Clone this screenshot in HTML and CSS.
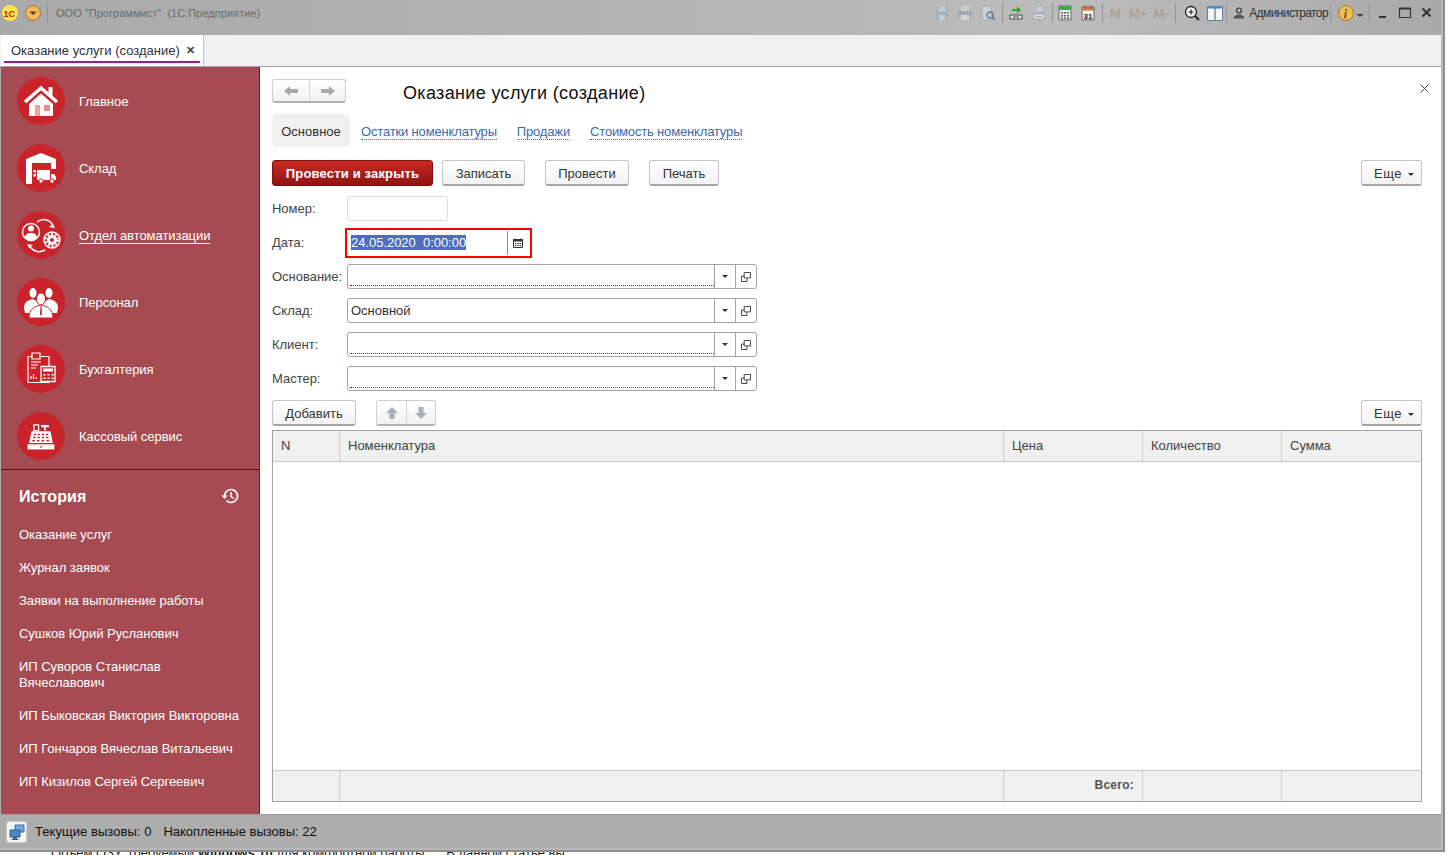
FILE: index.html
```html
<!DOCTYPE html>
<html lang="ru">
<head>
<meta charset="utf-8">
<title>Оказание услуги (создание)</title>
<link rel="stylesheet" href="styles.css">
</head>
<body>
<div class="window">
  <header class="titlebar">
    <svg class="logo" width="20" height="20" viewBox="0 0 20 20"><circle cx="10" cy="10" r="8" fill="#fbe64a"/><text x="3.500" y="13.500" class="logo-text">1С</text></svg>
    <svg class="menu-btn" width="18" height="18" viewBox="0 0 18 18"><circle cx="9" cy="9" r="7.500" fill="#edb860" stroke="#a9752c"/><path d="M5.500 7.500h7L9 11z" fill="#5a3c16"/></svg>
    <span class="tb-sep title-sep"></span>
    <span class="app-title">ООО "Программист"  (1С:Предприятие)</span>
    <div class="tools">
      <svg class="ti" viewBox="0 0 16 16"><path d="M2 1h12v14H2z" fill="#a5b2bc"/><path d="M4.500 1.500h7v5h-7zM5 10h6v5H5z" fill="#c4ccd2"/></svg>
      <svg class="ti" viewBox="0 0 16 16"><path d="M4 1h8v5H4z" fill="#c8cdd1"/><path d="M1 6h14v6H1z" fill="#9faab3"/><path d="M4 10h8v5H4z" fill="#d3d6d8"/></svg>
      <svg class="ti" viewBox="0 0 16 16"><path d="M2 1h9v14H2z" fill="#cdd2d6" stroke="#a4aeb6"/><circle cx="10" cy="10" r="3" fill="none" stroke="#6f8090" stroke-width="1.500"/><path d="M12 12l3 3" stroke="#6f8090" stroke-width="2"/></svg>
      <span class="tb-sep"></span>
      <svg class="ti" viewBox="0 0 16 16"><path d="M4 4h5V1.500L13 5 9 8.500V6H4z" fill="#1faa2c"/><path d="M2 10h12v4H2z" fill="#e9e9e9" stroke="#444"/><path d="M5 12h6" stroke="#444"/></svg>
      <svg class="ti" viewBox="0 0 16 16"><path d="M5 1h7v6H5z" fill="#ccd0d4" stroke="#a7b0b8"/><path d="M2 9h12v5H2z" fill="#d8dadc" stroke="#9ca6ae"/><path d="M5 11.500h6" stroke="#9ca6ae"/></svg>
      <span class="tb-sep tight"></span>
      <svg class="ti" viewBox="0 0 16 16"><path d="M2 1h12v14H2z" fill="#e8e8e8" stroke="#6d6d6d"/><path d="M2 1h12v4H2z" fill="#3fae49"/><path d="M4 7h2v1.500H4zm3 0h2v1.500H7zm3 0h2v1.500h-2zM4 10h2v1.500H4zm3 0h2v1.500H7zm3 0h2v1.500h-2zM4 12.500h2V14H4zm3 0h2V14H7zm3 0h2V14h-2z" fill="#666"/></svg>
      <svg class="ti" viewBox="0 0 16 16"><path d="M2 2h12v13H2z" fill="#f0f0f0" stroke="#666"/><path d="M2 2h12v3.500H2z" fill="#c9794a"/><path d="M5 .5v3M11 .5v3" stroke="#8a4d28"/><text x="3.500" y="13.500" class="cal-text">31</text></svg>
      <span class="tb-sep tight-right"></span>
      <span class="mem">M</span><span class="mem">M+</span><span class="mem">M-</span>
      <span class="tb-sep"></span>
      <svg class="ti zoom-i" viewBox="0 0 16 16"><circle cx="7" cy="7" r="5.500" fill="#f4f4f4" stroke="#222" stroke-width="1.300"/><path d="M4.500 7h5M7 4.500v5" stroke="#222" stroke-width="1.200"/><path d="M11 11l4 4" stroke="#222" stroke-width="1.800"/></svg>
      <svg class="ti panel-i" viewBox="0 0 16 16"><path d="M.5 1.500h15v14H.5z" fill="#f6f6f6" stroke="#66809c"/><path d="M1 1.500h14v2H1z" fill="#3c8ed6"/><path d="M8 3v12" stroke="#556"/></svg>
      <span class="tb-sep"></span>
      <svg class="user-i" width="12" height="12" viewBox="0 0 12 12"><circle cx="6" cy="3.500" r="2.500" fill="none" stroke="#333" stroke-width="1.200"/><path d="M1 11.500V9.500L4.500 7.500h3L11 9.500v2z" fill="#555"/></svg>
      <span class="user">Администратор</span>
      <span class="tb-sep"></span>
      <svg class="info" width="18" height="18" viewBox="0 0 18 18"><circle cx="9" cy="9" r="7.500" fill="#f0bd58" stroke="#a9752c"/><text x="6.800" y="14" class="info-text">i</text></svg>
      <span class="caret dark"></span>
      <span class="tb-sep"></span>
      <svg class="win-b" width="14" height="14" viewBox="0 0 14 14"><path d="M3 11h7" stroke="#333" stroke-width="2"/></svg>
      <svg class="win-b" width="14" height="14" viewBox="0 0 14 14"><path d="M1.500 2.500h11v9h-11z" fill="none" stroke="#333" stroke-width="1.200"/><path d="M1 2.500h12" stroke="#333" stroke-width="2"/></svg>
      <svg class="win-b" width="14" height="14" viewBox="0 0 14 14"><path d="M2.500 2.500l8 8M10.500 2.500l-8 8" stroke="#333" stroke-width="2"/></svg>
    </div>
  </header>

  <div class="tabbar">
    <div class="tab"><span class="tab-label">Оказание услуги (создание)</span><span class="tab-x">✕</span></div>
  </div>

  <div class="main">
    <aside class="sidebar">
      <nav class="sections">
        <a class="section">
          <span class="circle"><svg width="36" height="36" viewBox="0 0 36 36"><path d="M2 19L18 5l16 14" fill="none" stroke="#fff" stroke-width="3.500"/><path d="M25.500 4h4v9h-4z" fill="#fff"/><path d="M6 21l12-10.500L30 21v12H6z" fill="#fff"/><path d="M12 22h5v11h-5z" fill="#e9a58f"/><path d="M21 22h6v6h-6z" fill="#e48d8d"/></svg></span>
          <span>Главное</span>
        </a>
        <a class="section">
          <span class="circle"><svg width="42" height="42" viewBox="0 0 42 42"><path d="M6 37V12L21 6l15 6v10h-5v-6H12v21z" fill="#fff"/><path d="M17 23h13v10H17z" fill="#fff"/><path d="M31 27h3l2 3v3h-5z" fill="#fff"/><path d="M13.500 23H16v2.500h-2.500zm0 4H16v2.500h-2.500z" fill="#fff"/><circle cx="21" cy="34" r="2.200" fill="#fff" stroke="#c9242c"/><circle cx="32" cy="34" r="2.200" fill="#fff" stroke="#c9242c"/></svg></span>
          <span>Склад</span>
        </a>
        <a class="section">
          <span class="circle"><svg width="46" height="46" viewBox="0 0 46 46"><circle cx="13" cy="20" r="8.500" fill="none" stroke="#fff" stroke-width="1.400"/><circle cx="13" cy="16.500" r="3" fill="#fff"/><path d="M7 26c0-4 3-5 6-5s6 1 6 5l-3 2h-6z" fill="#fff"/><circle cx="34" cy="28" r="8" fill="none" stroke="#fff" stroke-width="1.400"/><circle cx="34" cy="28" r="3.500" fill="none" stroke="#fff" stroke-width="3"/><circle cx="34" cy="28" r="6" fill="none" stroke="#fff" stroke-width="2" stroke-dasharray="2 1.800"/><path d="M19 10c5-4 12-3 16 3" fill="none" stroke="#fff" stroke-width="1.500"/><path d="M37 16l-6-1 4-3z" fill="#fff"/><path d="M27 38c-5 3-11 2-15-3" fill="none" stroke="#fff" stroke-width="1.500"/><path d="M9 32l6 1-4 3z" fill="#fff"/></svg></span>
          <span class="underlined">Отдел автоматизации</span>
        </a>
        <a class="section">
          <span class="circle"><svg width="36" height="36" viewBox="0 0 36 36"><ellipse cx="10" cy="9" rx="3.500" ry="5" fill="#fff"/><ellipse cx="26" cy="9" rx="3.500" ry="5" fill="#fff"/><path d="M1 24c0-6 4-8 9-9l8 5-4 9H2z" fill="#fff"/><path d="M35 24c0-6-4-8-9-9l-8 5 4 9h12z" fill="#fff"/><ellipse cx="18" cy="15" rx="4.500" ry="6" fill="#fff" stroke="#c9242c"/><path d="M6 34c0-8 5-12 12-13 7 1 12 5 12 13z" fill="#fff" stroke="#c9242c"/><path d="M17.500 22h1l.5 8-1 2-1-2z" fill="#c9242c"/></svg></span>
          <span>Персонал</span>
        </a>
        <a class="section">
          <span class="circle"><svg width="38" height="38" viewBox="0 0 38 38"><path d="M6 6.500h21v26H6z" fill="none" stroke="#fff" stroke-width="1.200"/><path d="M10 3h8v6h-8z" fill="#c9242c" stroke="#fff" stroke-width="1.200"/><path d="M9 12h10M9 15h7M9 18h5" stroke="#fff"/><path d="M9 29v-3M11.500 29v-5M14 29v-2" stroke="#fff" stroke-width="1.200"/><path d="M19 16.500h14v15H19z" fill="#c9242c" stroke="#fff" stroke-width="1.300"/><path d="M21 18.500h10v3H21z" fill="#fff"/><path d="M21.500 24h2v1.500h-2zm4 0h2v1.500h-2zm4 0h2v1.500h-2zM21.500 27.500h2V29h-2zm4 0h2V29h-2zm4 0h2V29h-2z" fill="#fff"/></svg></span>
          <span>Бухгалтерия</span>
        </a>
        <a class="section">
          <span class="circle"><svg width="30" height="30" viewBox="0 0 38 38"><path d="M10 5h6v7h-6z" fill="none" stroke="#fff" stroke-width="1.500"/><path d="M19 5h10v3h-4v4h-2V8h-4z" fill="#fff"/><path d="M7 13h24l3 15H4z" fill="#fff"/><path d="M10 16h3v2h-3zm5 0h3v2h-3zm5 0h3v2h-3zm5 0h3v2h-3zM9 20h3v2H9zm5.500 0h3v2h-3zm5.500 0h3v2h-3zm5.500 0h3v2h-3zM8 24h3v2H8zm6 0h3v2h-3zm6 0h3v2h-3zm6 0h3v2h-3z" fill="#c9242c"/><path d="M2 29.500h34V36H2z" fill="#fff"/><path d="M17.500 32h3v1.500h-3z" fill="#c9242c"/></svg></span>
          <span>Кассовый сервис</span>
        </a>
      </nav>
      <section class="history">
        <div class="history-head">
          <h2>История</h2>
          <svg width="18" height="18" viewBox="0 0 18 18"><path d="M3.500 9a6.500 6.500 0 1 1 2 4.700" fill="none" stroke="#fff" stroke-width="1.700"/><path d="M.5 8.500h6l-3 3.500z" fill="#fff"/><path d="M10 5v4.500l3 2" fill="none" stroke="#fff" stroke-width="1.500"/></svg>
        </div>
        <ul class="history-list">
          <li>Оказание услуг</li>
          <li>Журнал заявок</li>
          <li>Заявки на выполнение работы</li>
          <li>Сушков Юрий Русланович</li>
          <li>ИП Суворов Станислав<br>Вячеславович</li>
          <li>ИП Быковская Виктория Викторовна</li>
          <li>ИП Гончаров Вячеслав Витальевич</li>
          <li>ИП Кизилов Сергей Сергеевич</li>
        </ul>
      </section>
    </aside>

    <main class="content">
      <div class="head-row">
        <div class="nav-group">
          <button class="nav-btn" type="button"><svg width="16" height="12" viewBox="0 0 16 12"><path d="M1 6l6-5v3h8v4H7v3z" fill="#a9a9a9"/></svg></button>
          <button class="nav-btn" type="button"><svg width="16" height="12" viewBox="0 0 16 12"><path d="M15 6L9 1v3H1v4h8v3z" fill="#a9a9a9"/></svg></button>
        </div>
        <h1>Оказание услуги (создание)</h1>
        <svg class="close" width="9" height="9" viewBox="0 0 9 9"><path d="M.5.500l8 8M8.500.500l-8 8" stroke="#444" stroke-width="1"/></svg>
      </div>

      <div class="tabs">
        <span class="tab-active">Основное</span>
        <a class="link l1">Остатки номенклатуры</a>
        <a class="link l2">Продажи</a>
        <a class="link l3">Стоимость номенклатуры</a>
      </div>

      <div class="commands">
        <button class="btn primary" type="button">Провести и закрыть</button>
        <button class="btn save" type="button">Записать</button>
        <button class="btn post" type="button">Провести</button>
        <button class="btn print" type="button">Печать</button>
        <button class="btn more" type="button">Еще<span class="caret"></span></button>
      </div>

      <form class="form">
        <div class="row"><label>Номер:</label><div class="field number"></div></div>
        <div class="row"><label>Дата:</label>
          <div class="date-box">
            <span class="date-val"><span class="selected">24.05.2020&nbsp; 0:00:00</span></span>
            <span class="date-btn"><svg width="10" height="10" viewBox="0 0 10 10"><path d="M.5 1.500h9v8h-9z" fill="none" stroke="#333"/><path d="M.5 1h9v2.500h-9z" fill="#333"/><path d="M2 .5v1M8 .5v1" stroke="#333"/><path d="M2 5h1.500v1H2zm2.300 0h1.500v1H4.300zm2.300 0h1.500v1H6.600zM2 7h1.500v1H2zm2.300 0h1.500v1H4.300zm2.300 0h1.500v1H6.600z" fill="#333"/></svg></span>
          </div>
        </div>
        <div class="row"><label>Основание:</label>
          <div class="field combo"><span class="combo-input required"></span><span class="combo-btn"><span class="caret"></span></span><span class="combo-btn"><svg viewBox="0 0 11 11"><path d="M3.500.5h7v6h-7z" fill="none" stroke="#333"/><path d="M.5 4.500h3M.5 4.500v6h6v-3.500" fill="none" stroke="#333"/></svg></span></div>
        </div>
        <div class="row"><label>Склад:</label>
          <div class="field combo"><span class="combo-input">Основной</span><span class="combo-btn"><span class="caret"></span></span><span class="combo-btn"><svg viewBox="0 0 11 11"><path d="M3.500.5h7v6h-7z" fill="none" stroke="#333"/><path d="M.5 4.500h3M.5 4.500v6h6v-3.500" fill="none" stroke="#333"/></svg></span></div>
        </div>
        <div class="row"><label>Клиент:</label>
          <div class="field combo"><span class="combo-input required"></span><span class="combo-btn"><span class="caret"></span></span><span class="combo-btn"><svg viewBox="0 0 11 11"><path d="M3.500.5h7v6h-7z" fill="none" stroke="#333"/><path d="M.5 4.500h3M.5 4.500v6h6v-3.500" fill="none" stroke="#333"/></svg></span></div>
        </div>
        <div class="row"><label>Мастер:</label>
          <div class="field combo"><span class="combo-input required"></span><span class="combo-btn"><span class="caret"></span></span><span class="combo-btn"><svg viewBox="0 0 11 11"><path d="M3.500.5h7v6h-7z" fill="none" stroke="#333"/><path d="M.5 4.500h3M.5 4.500v6h6v-3.500" fill="none" stroke="#333"/></svg></span></div>
        </div>
      </form>

      <div class="table-bar">
        <button class="btn add" type="button">Добавить</button>
        <div class="move-group">
          <button class="move-btn" type="button"><svg width="14" height="14" viewBox="0 0 14 14"><path d="M7 1l6 6H9.500v6h-5V7H1z" fill="#a6b0b5"/></svg></button>
          <button class="move-btn" type="button"><svg width="14" height="14" viewBox="0 0 14 14"><path d="M7 13l6-6H9.500V1h-5v6H1z" fill="#a6b0b5"/></svg></button>
        </div>
        <button class="btn more" type="button">Еще<span class="caret"></span></button>
      </div>

      <div class="table">
        <div class="t-head">
          <div class="cell">N</div><div class="cell">Номенклатура</div><div class="cell">Цена</div><div class="cell">Количество</div><div class="cell">Сумма</div>
        </div>
        <div class="t-body"></div>
        <div class="t-foot">
          <div class="cell"></div><div class="cell"></div><div class="cell total">Всего:</div><div class="cell"></div><div class="cell"></div>
        </div>
      </div>
    </main>
  </div>

  <footer class="statusbar">
    <span class="status-btn"><svg width="18" height="18" viewBox="0 0 18 18"><path d="M7 2h9v7H7z" fill="#6fa8dc" stroke="#3d6d9c"/><path d="M2 7h10v7H2z" fill="#4a86c5" stroke="#2f5e8e"/><path d="M5 14h4v2H5zM3.500 16h7v1h-7z" fill="#557"/></svg></span>
    <span class="st-a">Текущие вызовы: 0</span>
    <span class="st-b">Накопленные вызовы: 22</span>
  </footer>
</div>
<div class="behind">Объем ОЗУ, требуемый <b>Windows 10</b> для комфортной работы      В данной статье вы</div>
</body>
</html>
```

FILE: styles.css
```css
* { box-sizing: border-box; }
html, body { margin: 0; padding: 0; height: 855px; overflow: hidden; background: #fff; }
body { font-family: "Liberation Sans", Arial, sans-serif; font-size: 13px; color: #333; position: relative; }

.window {
  width: 1445px; height: 852px; display: flex; flex-direction: column;
  background: #b8b8b8; padding: 0 2px 2px 0; border-right: 2px solid #8f8f8f; border-bottom: 2px solid #8f8f8f;
  position: relative; z-index: 1;
}

/* Title bar */
.titlebar {
  height: 35px; flex: none; display: flex; align-items: center; padding-bottom: 9px;
  background: linear-gradient(90deg, #a9a9a9 0%, #b4b4b4 45%, #bcbcbc 75%, #a9a9aa 100%);
}
.logo { flex: none; }
.logo-text { font: bold 9px "Liberation Sans", sans-serif; fill: #d42020; }
.cal-text { font: bold 8px "Liberation Sans", sans-serif; fill: #222; }
.info-text { font: italic bold 12px "Liberation Serif", serif; fill: #6a4512; }
.menu-btn { margin-left: 4px; flex: none; }
.tb-sep { width: 1px; height: 20px; background: #949494; margin: 0 2px; flex: none; }
.title-sep { margin: 0 5px; }
.tb-sep.tight { margin: 0 1px; }
.tb-sep.tight-right { margin: 0 1px 0 2px; }
.app-title { font-size: 11px; color: #6b6b6b; white-space: pre; margin-left: 3px; letter-spacing: .03px; }
.tools { margin-left: auto; display: flex; align-items: center; padding-right: 3px; }
.ti { width: 16px; height: 16px; margin: 0 3.500px; flex: none; }
.zoom-i { margin-left: 6px; }
.panel-i { margin-right: 1.500px; }
.mem { font-size: 13px; font-weight: bold; color: #a8a098; width: 23px; text-align: center; }
.user-i { margin-left: 4px; flex: none; }
.user { font-size: 12px; color: #333; margin-left: 4px; letter-spacing: -.6px; white-space: nowrap; }
.info { margin-left: 4px; flex: none; }
.caret { display: inline-block; width: 0; height: 0; border: 3px solid transparent; border-top: 3.500px solid #333; border-bottom: 0; }
.caret.dark { margin: 5px 3px 0 1px; border-width: 4px; border-top-width: 3px; border-bottom: 0; border-top-color: #444; }
.win-b { margin: 0 4px; flex: none; }

/* Tabs bar */
.tabbar { height: 32px; flex: none; background: #f0f0f0; border-bottom: 1px solid #a3a3a3; display: flex; }
.tab {
  width: 203px; margin-left: 1px; background: #fff; border-right: 1px solid #c4c4c4;
  padding: 8px 0 0 10px; display: flex; position: relative; font-size: 13px; color: #333;
}
.tab::after { content: ""; position: absolute; left: 3px; right: 3px; bottom: 3px; height: 2px; background: #951f8f; }
.tab-label { color: #2f2f3f; }
.tab-x { margin-left: 6px; font-size: 11px; font-weight: bold; color: #444; line-height: 15px; }

/* Main */
.main { flex: 1; min-height: 0; display: flex; background: #fff; }

.sidebar {
  width: 260px; flex: none; display: flex; flex-direction: column;
  background: #a64b52; border-left: 1px solid #a4adad; border-right: 1px solid #7a1c20; color: #fff;
}
.sections { padding: 0 0 0 16px; height: 403px; border-bottom: 1px solid #6b0d10; }
.section { display: flex; align-items: center; height: 67px; gap: 14px; font-size: 13px; letter-spacing: -.05px; }
.section > span:last-child { position: relative; top: 1px; }
.circle { width: 48px; height: 48px; border-radius: 50%; background: #c9242c; display: flex; align-items: center; justify-content: center; flex: none; }
.underlined { border-bottom: 1px solid #fff; line-height: 15px; }

.history { padding: 0 0 0 18px; }
.history-head { display: flex; align-items: center; justify-content: space-between; height: 49px; padding: 3px 20px 0 0; }
.history-head h2 { font-size: 16px; font-weight: bold; margin: 0; color: #fff; position: relative; top: 1px; letter-spacing: .1px; }
.history-list { list-style: none; margin: 8px 0 0; padding: 0; }
.history-list li { font-size: 13px; line-height: 16px; padding: 0; margin-bottom: 17px; color: #fff; letter-spacing: -.03px; }

/* Content */
.content { flex: 1; min-width: 0; padding: 12px 19px 12px 12px; display: flex; flex-direction: column; background: #fff; }
.head-row { display: flex; height: 24px; align-items: center; position: relative; flex: none; }
.nav-group, .move-group { display: flex; flex: none; border: 1px solid #cfcfcf; border-bottom: 2px solid #b4b4b4; border-radius: 3px; background: linear-gradient(#fff, #f1f1f1); }
.nav-btn, .move-btn { border: 0; background: none; padding: 0; display: flex; align-items: center; justify-content: center; }
.nav-btn { width: 36px; height: 21px; }
.nav-btn + .nav-btn { border-left: 1px solid #d4d4d4; }
h1 { font-size: 18px; font-weight: normal; color: #111; margin: 0 0 0 57px; position: relative; top: 2px; letter-spacing: .34px; }
.close { position: absolute; right: -7px; top: 5px; }

.tabs { display: flex; height: 33px; margin-top: 11px; align-items: center; flex: none; }
.tab-active { width: 78px; height: 33px; background: #f0f0f0; border-radius: 5px; text-align: center; line-height: 35px; font-size: 13px; color: #333; }
.link { font-size: 13px; color: #3c69ac; border-bottom: 1px dotted #2f6fd0; line-height: 14px; position: relative; top: 2px; letter-spacing: -.16px; }
.l1 { margin-left: 11px; }
.l2 { margin-left: 20px; }
.l3 { margin-left: 20px; }

.commands { display: flex; margin-top: 13px; height: 26px; flex: none; }
.btn {
  height: 26px; font: 13px "Liberation Sans", Arial, sans-serif; color: #333; padding: 2px 0 0;
  border: 1px solid #c4c4c4; border-bottom: 2px solid #a5a5a5; border-radius: 3px;
  background: linear-gradient(#fff, #f3f3f3);
}
.primary { width: 161px; font-weight: bold; font-size: 13px; letter-spacing: .17px; color: #fff; border: 1px solid #7c0f0f; padding: 0; background: linear-gradient(#ca2a24, #8f1414); }
.save { width: 83px; margin-left: 9px; }
.post { width: 84px; margin-left: 20px; }
.print { width: 70px; margin-left: 20px; }
.more { width: 61px; margin-left: auto; text-align: left; padding-left: 12px; letter-spacing: .5px; }
.more .caret { margin-left: 6px; vertical-align: 2px; }

.form { margin-top: 6px; flex: none; }
.row { height: 34px; display: flex; padding-top: 4px; }
.row label { width: 75px; flex: none; font-size: 13px; color: #444; line-height: 25px; letter-spacing: -.02px; }
.field { height: 25px; border: 1px solid #a3a3a3; border-radius: 3px; background: #fff; }
.number { width: 101px; border-color: #dcdcdc; }
.date-box {
  width: 187px; height: 30px; margin: -2px 0 0 -2px; border: 2px solid #f00; display: flex; align-items: center; background: #fff;
}
.date-val { flex: none; width: 160px; padding: 0 0 2px 4px; font-size: 13px; line-height: 15px; white-space: nowrap; letter-spacing: -.03px; }
.selected { background: #4f6cc2; color: #fff; }
.date-btn { flex: 1; height: 24px; border-left: 1px solid #8e8e8e; padding-right: 3px; display: flex; align-items: center; justify-content: center; }
.combo { width: 410px; display: flex; }
.combo-input { flex: 1; padding: 0 0 0 3px; font-size: 13px; line-height: 23px; color: #333; position: relative; }
.required::after { content: ""; position: absolute; left: 2px; right: 0; bottom: 2px; border-bottom: 1px dotted #e60000; }
.combo-btn { width: 21px; flex: none; border-left: 1px solid #a3a3a3; display: flex; align-items: center; justify-content: center; }
.combo-btn svg { width: 10px; height: 10px; }

.table-bar { display: flex; height: 26px; margin-top: 4px; flex: none; }
.add { width: 84px; }
.move-group { margin-left: 20px; height: 26px; }
.move-btn { width: 29px; height: 23px; }
.move-btn + .move-btn { border-left: 1px solid #d4d4d4; }

.table { flex: 1; margin-top: 4px; min-height: 0; display: flex; flex-direction: column; border: 1px solid #a3a3a3; }
.t-head, .t-foot { display: grid; grid-template-columns: 67px 664px 139px 139px 1fr; height: 31px; flex: none; background: #f0f0f0; }
.t-head { border-bottom: 1px solid #c9c9c9; }
.t-foot { border-top: 1px solid #c9c9c9; }
.t-body { flex: 1; background: #fff; }
.cell { padding: 0 0 0 8px; font-size: 13px; line-height: 29px; color: #444; border-right: 1px solid #cecece; }
.cell:last-child { border-right: 0; }
.total { font-weight: bold; text-align: right; padding-right: 8px; color: #555; font-size: 12px; letter-spacing: .2px; }

/* Status bar */
.statusbar { flex: none; height: 34px; display: flex; align-items: center; padding-left: 6px; background: #adadad; border-top: 1px solid #9b9b9b; font-size: 13px; color: #111; }
.status-btn { width: 21px; height: 22px; background: #f4f4f4; border: 1px solid #c8c8c8; border-radius: 3px; display: flex; align-items: center; justify-content: center; }
.st-a { margin-left: 8px; letter-spacing: .05px; }
.st-b { margin-left: 12px; }

.behind { position: absolute; left: 51px; top: 846px; font-size: 13px; white-space: pre; color: #222; line-height: 14px; }
```
